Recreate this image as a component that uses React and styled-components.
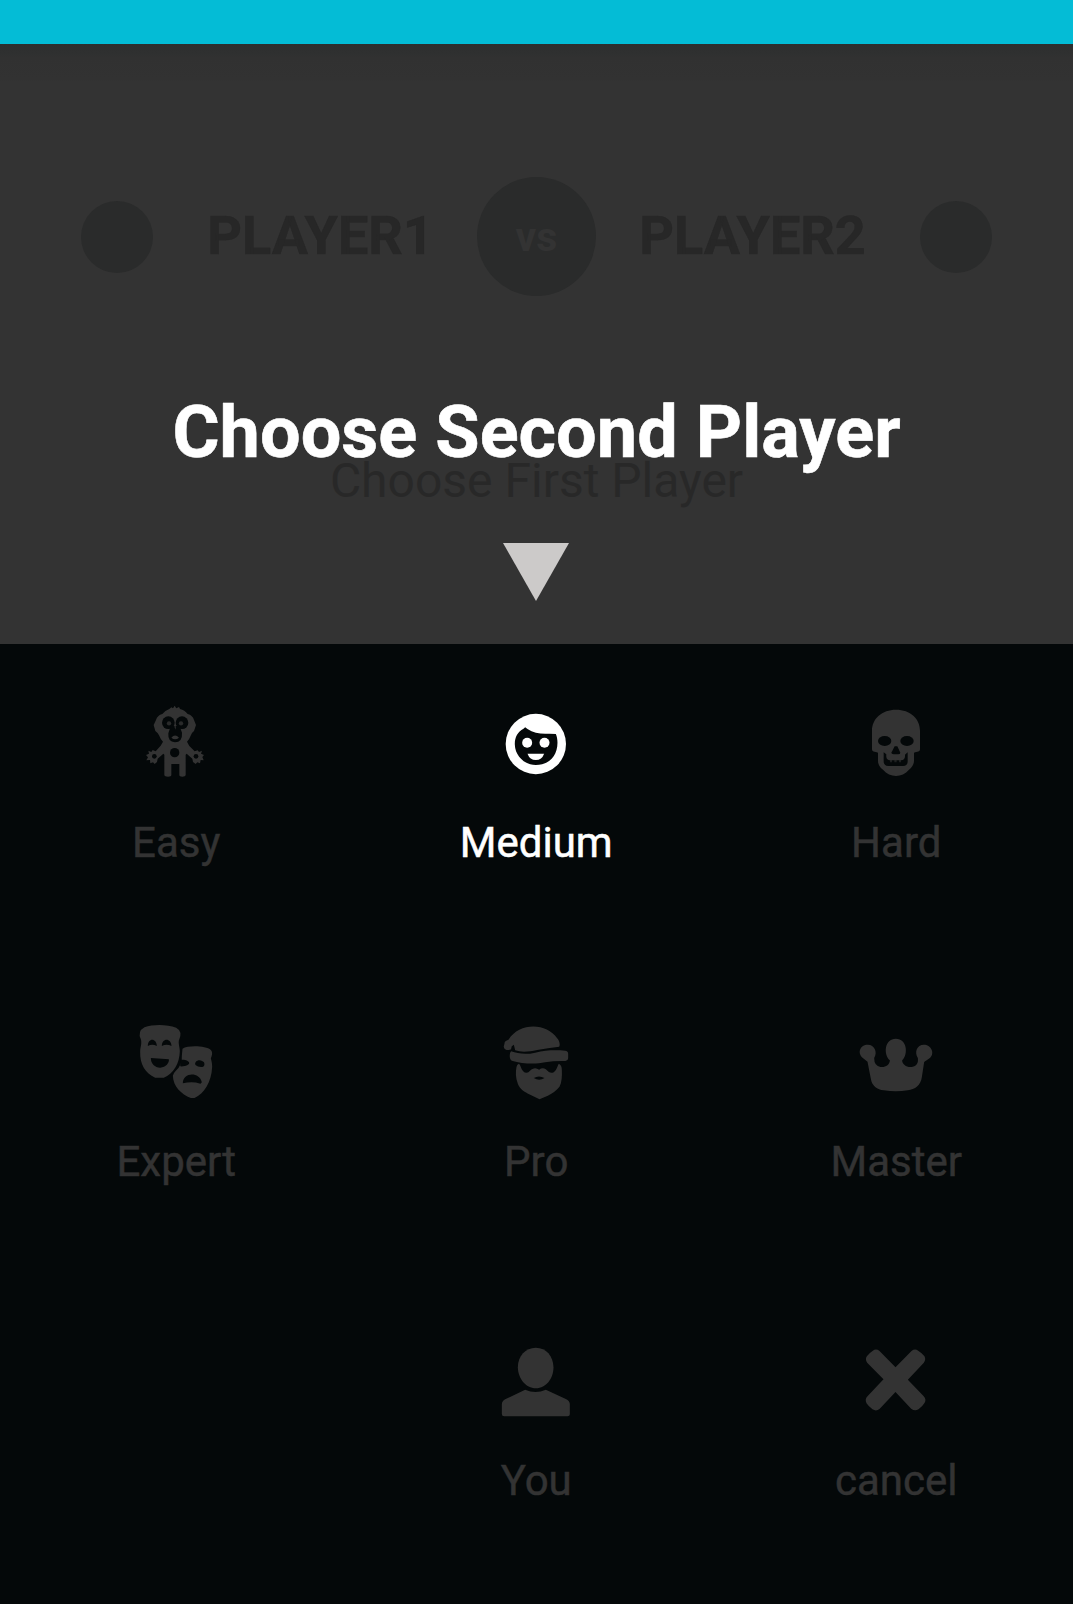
import React from "react";
import styled, { createGlobalStyle } from "styled-components";

const GlobalStyle = createGlobalStyle`
  * { box-sizing: border-box; }
  body { margin: 0; background: #040809; font-family: Roboto, "Liberation Sans", sans-serif; }
`;

const Screen = styled.main`
  width: 1073px;
  height: 1604px;
  overflow: hidden;
  background: #040809;
`;

const AppBar = styled.header`
  height: 44px;
  background: #04bcd6;
`;

const Hero = styled.section`
  height: 600px;
  background: linear-gradient(#2d2e2e 0, #2f3030 9px, #313131 14px, #323232 36px, #333333 38px);
  display: flex;
  flex-direction: column;
  align-items: center;
`;

const Versus = styled.div`
  width: 911px;
  height: 120px;
  margin-top: 132.5px;
  display: grid;
  grid-template-columns: 83px 1fr 119px 1fr 83px;
  align-items: center;
  justify-items: center;

  & > :first-child { justify-self: start; }
  & > :last-child { justify-self: end; }
`;

const Disc = styled.div`
  width: ${(p) => p.$size}px;
  height: ${(p) => p.$size}px;
  border-radius: 50%;
  background: #2a2b2b;
  color: #333333;
  display: flex;
  align-items: center;
  justify-content: center;
  font-size: 41px;
  font-weight: 700;
`;

const PlayerName = styled.div`
  padding-bottom: 2px;
  font-size: 54px;
  line-height: 60px;
  font-weight: 700;
  color: #272727;
  -webkit-text-stroke: 0.4px;
`;

const Title = styled.h1`
  position: relative;
  z-index: 1;
  margin: 110.5px 0 0;
  font-size: 72px;
  letter-spacing: 0.05px;
  line-height: 52px;
  font-weight: 700;
  color: #ffffff;
  white-space: nowrap;
  -webkit-text-stroke: 0.6px;
`;

const Subtitle = styled.p`
  margin: -1px 0 0;
  font-size: 48px;
  line-height: 46px;
  color: #282828;
`;

const Arrow = styled.svg`
  display: block;
  width: 66px;
  height: 58px;
  margin: 39px 2px 0 0;
  fill: #cccac9;
`;

const Levels = styled.section`
  display: grid;
  grid-template-columns: repeat(3, 360px);
  grid-auto-rows: 319px;
  margin: 0 -3.75px;
`;

const Level = styled.div`
  display: flex;
  flex-direction: column;
  align-items: center;
  padding-top: 46px;
  color: ${(p) => (p.$active ? "#ffffff" : "#333333")};
`;

const Glyph = styled.svg`
  width: 90px;
  height: 100px;
  fill: currentColor;
`;

const Label = styled.div`
  margin-top: 28px;
  font-size: 42px;
  line-height: 50px;
  -webkit-text-stroke: 0.5px;
`;

const dark = "#040809";

const icons = {
  monkey: {
    x: 3,
    y: 0,
    art: (
      <>
        <path d="M118 57L124 52L129 55L134 47L139 55L147 51L150 57Q164 60 173 72Q188 76 192 90L198 105L192 123Q184 129 182 137Q178 148 171 155L178 168L194 184L203 181L207 186L216 182L213 191L222 195L217 201L221 211L212 210L210 220L202 217L197 222L189 216L187 206L170 191L167 194V256Q166 260 157 260Q148 260 148 255V222H124V255Q124 260 114 260Q104 260 103 255V194L100 191L83 206L81 216L74 222L69 217L61 220L60 210L49 211L54 202L48 195L57 191L55 182L64 186L68 180L77 184L92 167L99 155Q91 147 87 136Q84 128 76 123L71 105L78 90Q82 76 97 72Q105 61 118 57Z" />
        <g fill={dark}>
          <circle cx="115" cy="98" r="19" />
          <circle cx="156" cy="98" r="19" />
          <path d="M121 108H150Q151 117 156 128Q158 156 135 157Q113 156 115 130Q120 118 121 108Z" />
          <circle cx="134" cy="188" r="14" />
          <circle cx="73" cy="199" r="7" />
          <circle cx="198" cy="199" r="7" />
        </g>
        <circle opacity=".8" cx="117" cy="100" r="6.5" />
        <circle opacity=".8" cx="153" cy="100" r="6.5" />
        <path d="M124 143Q135 130 147 143Q135 153 124 143ZM133 109L136 119L138 109Z" />
      </>
    ),
  },
  face: {
    y: -30,
    art: (
      <>
        <circle cx="138" cy="132" r="90.5" />
        <path fill={dark} d="M106 82l7 5c19 13 42 16 66 14l19 1c9 21 5 49-6 66-12 18-31 27-54 27-34 0-62-28-63-61-1-20 7-38 26-48z" />
        <circle cx="112" cy="128" r="15" />
        <circle cx="164" cy="128" r="15" />
        <path d="M113 161h50q-7 19-25 19t-25-19z" />
      </>
    ),
  },
  skull: {
    x: 3,
    y: -1,
    art: (
      <>
        <path d="M138 58C181 58 210 85 210 121V177C210 184 202 185 192 187V211C192 221 187 230 177 238C156 263 120 263 99 238C88 230 84 221 84 211V187C74 185 66 184 66 177V121C66 85 96 58 138 58Z" />
        <g fill={dark}>
          <ellipse cx="104" cy="152" rx="20" ry="15" />
          <ellipse cx="171" cy="152" rx="20" ry="15" />
          <path d="M134 168h8l9 19q0 5-7 5h-13q-7-1-7-5z" />
          <path d="M101 186l8 6c-1 10 1 18 13 18h31c10 0 13-8 12-17l8-7v27c0 9-5 14-14 14h-44c-10 0-14-6-14-14z" />
        </g>
        <path opacity=".55" d="M120 208h6v8h-6zM147 208h6v8h-6zM133 208h7v8h-7z" />
      </>
    ),
  },
  masks: {
    x: 18.5,
    y: -5,
    art: (
      <>
        <path d="M173 114C190 103 244 105 258 118C265 126 261 136 258 143C260 151 262 158 262 168C260 215 238 248 209 262H198C169 250 145 227 144 195Q145 188 153 180Q173 162 171 135Z" />
        <path d="M59 50C85 40 127 41 154 51Q174 62 163 87C159 95 165 110 165 122C164 160 145 190 117 201H91C61 188 45 160 46 124C46 110 52 99 48 86Q37 62 59 50Z" />
        <g fill={dark}>
          <path d="M69 106c0-25 26-25 27 0q-14-8-27 0zM111 106c0-25 28-25 29 0q-15-8-29 0z" />
          <path d="M78 142l54 4c2 10-9 25-26 25-16 0-28-12-28-29z" />
          <path d="M167 148C180 146 193 151 193 157C193 163 182 168 166 167ZM212 163C207 153 222 144 233 152C241 154 240 167 235 168C226 171 218 167 212 163Z" />
          <path d="M174 218c0-34 50-35 57-3l-4 4c-17-5-34-5-53-1z" />
        </g>
      </>
    ),
  },
  santa: {
    y: -4,
    art: (
      <>
        <path d="M44 100Q43 92 56 88C88 36 170 36 202 84C208 90 212 102 208 109Q174 113 142 119C116 125 93 126 76 120L72 103Q63 107 64 117C56 122 40 119 42 107Z" />
        <path d="M64 123C85 131 110 133 136 127C168 119 197 119 226 121Q235 122 235 130V144Q235 151 227 152Q193 151 166 156C134 163 97 160 66 151C58 148 58 128 64 123Z" />
        <path d="M87 160C94 165 95 187 110 187C119 187 122 177 128 176Q137 170 148 178Q158 170 168 177C176 186 182 188 188 187C199 184 202 168 207 160Q216 165 216 178C217 197 216 216 209 229C200 241 186 250 174 256L149 267L121 253C104 245 89 235 84 220C77 202 77 185 80 170Q81 162 87 160Z" />
        <path fill={dark} d="M132 203q15-9 32 0-16 11-32 0z" />
      </>
    ),
  },
  crown: {
    y: -34,
    art: <path d="M54 73C74 73 84 95 73 113Q73 137 92 140C106 142 120 134 120 120C100 102 104 55 138 55S176 102 157 120C157 133 171 142 186 140C201 137 206 128 204 113C193 95 201 73 222 73S256 97 241 112C235 118 225 121 223 125L216 171C213 195 195 208 174 210Q138 216 102 210C82 208 66 196 63 175L53 124L39 113C21 97 31 73 54 73Z" />,
  },
  person: {
    y: -7,
    art: (
      <>
        <path d="M138 52c31 0 52 25 53 59 0 33-22 63-53 63s-53-29-54-63c0-34 23-59 54-59z" />
        <path d="M106 178q31 14 62 0l60 28q12 6 12 16v30q0 6-7 6H43q-7 0-7-7v-29q0-9 10-15z" />
      </>
    ),
  },
  cross: {
    y: -7,
    art: (
      <path d="M69 61q10-7 20 1l48 49 48-49q10-8 20-1 12 7 19 17 5 10-2 19l-48 51 47 49q10 10 3 21-6 10-18 19-11 7-22-2l-47-50-48 51q-10 8-21 1-12-9-18-18-6-12 3-21l48-51-49-50q-7-10-1-19 7-10 18-17z" />
    ),
  },
};

const levels = [
  { icon: "monkey", label: "Easy" },
  { icon: "face", label: "Medium", active: true },
  { icon: "skull", label: "Hard" },
  { icon: "masks", label: "Expert" },
  { icon: "santa", label: "Pro" },
  { icon: "crown", label: "Master" },
  null,
  { icon: "person", label: "You" },
  { icon: "cross", label: "cancel" },
];

export default function App() {
  return (
    <Screen>
      <GlobalStyle />
      <AppBar />
      <Hero>
        <Versus>
          <Disc $size={72} />
          <PlayerName>PLAYER1</PlayerName>
          <Disc $size={119}>vs</Disc>
          <PlayerName>PLAYER2</PlayerName>
          <Disc $size={72} />
        </Versus>
        <Title>Choose Second Player</Title>
        <Subtitle>Choose First Player</Subtitle>
        <Arrow viewBox="0 0 66 58">
          <path d="M0 0h66L33 58z" />
        </Arrow>
      </Hero>
      <Levels>
        {levels.map((level, i) =>
          level ? (
            <Level key={level.label} $active={level.active}>
              <Glyph viewBox={`${icons[level.icon].x ?? 3.5} ${icons[level.icon].y} 270 300`}>
                {icons[level.icon].art}
              </Glyph>
              <Label>{level.label}</Label>
            </Level>
          ) : (
            <div key={i} />
          )
        )}
      </Levels>
    </Screen>
  );
}
